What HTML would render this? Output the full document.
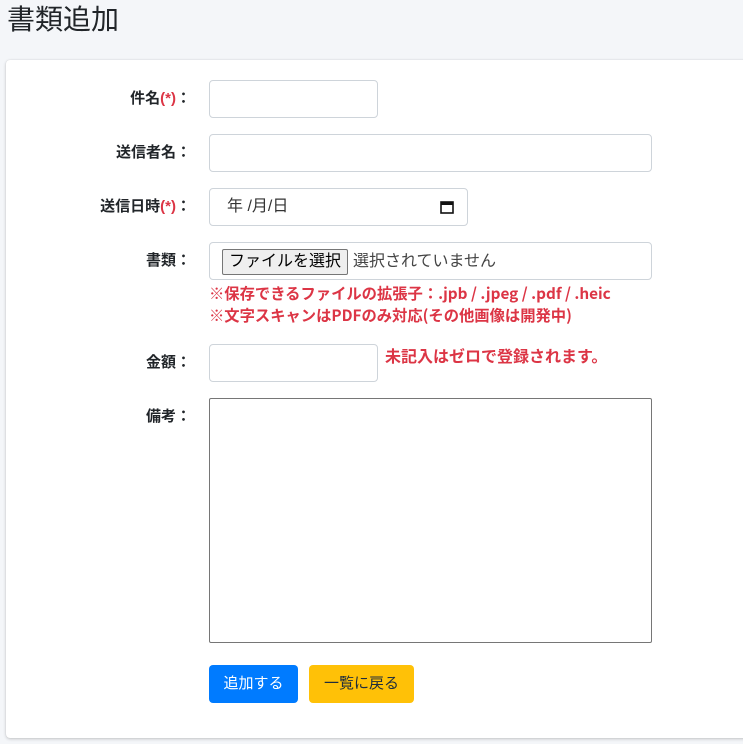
<!DOCTYPE html>
<html><head><meta charset="utf-8"><style>
body{margin:0;background:#f4f6f9;font-family:"Liberation Sans","Noto Sans CJK JP",sans-serif;width:743px;height:744px;overflow:hidden;position:relative;color:#212529}
h1{position:absolute;left:7px;top:2px;margin:0;font-size:28px;font-weight:400;line-height:36px}
.card{position:absolute;left:6px;top:60px;width:760px;height:678px;background:#fff;border-radius:4px;box-shadow:0 0 1px rgba(0,0,0,.13),0 1px 3px rgba(0,0,0,.2)}
.l{position:absolute;right:552px;font-weight:700;font-size:15px;line-height:20px;white-space:nowrap}
.l b{color:#dc3545}
.i{position:absolute;left:209px;border:1px solid #ced4da;border-radius:4px;background:#fff;box-sizing:border-box;height:38px}
.r{position:absolute;color:#dc3545;font-weight:700;font-size:15.3px;line-height:20px;white-space:nowrap;font-family:"Noto Sans CJK JP",sans-serif}
.btn{position:absolute;top:665px;height:38px;border-radius:4px;font-size:15px;line-height:38px;text-align:center}
</style></head><body>
<h1>書類追加</h1>
<div class="card"></div>
<div class="l" style="top:89px">件名<b>(*)</b>：</div>
<div class="i" style="top:80px;width:169px"></div>
<div class="l" style="top:143px">送信者名：</div>
<div class="i" style="top:134px;width:443px"></div>
<div class="l" style="top:197px">送信日時<b>(*)</b>：</div>
<div class="i" style="top:188px;width:259px;font-size:16px;line-height:36px;padding-left:17px;color:#333">年 /月/日
<svg style="position:absolute;left:230px;top:11px" width="14" height="14" viewBox="0 0 14 14"><rect x="1" y="2" width="12" height="11" fill="none" stroke="#111" stroke-width="1.6"/><rect x="1" y="2" width="12" height="3" fill="#111"/></svg></div>
<div class="l" style="top:251px">書類：</div>
<div class="i" style="top:242px;width:443px;font-size:16px;color:#444">
<span style="position:absolute;left:12px;top:6px;height:26px;width:126px;box-sizing:border-box;border:1px solid #767676;border-radius:2px;background:#efefef;color:#000;line-height:24px;text-align:center">ファイルを選択</span>
<span style="position:absolute;left:143px;top:8px;line-height:22px">選択されていません</span></div>
<div class="r" style="left:209px;top:283px">※保存できるファイルの拡張子：.jpb / .jpeg / .pdf / .heic</div>
<div class="r" style="left:209px;top:305px">※文字スキャンはPDFのみ対応(その他画像は開発中)</div>
<div class="l" style="top:353px">金額：</div>
<div class="i" style="top:344px;width:169px"></div>
<div class="r" style="left:385px;top:345px;font-size:16px">未記入はゼロで登録されます。</div>
<div class="l" style="top:407px">備考：</div>
<div class="i" style="top:398px;width:443px;height:245px;border-color:#767676;border-radius:2px"></div>
<div class="btn" style="left:209px;width:89px;background:#007bff;color:#fff">追加する</div>
<div class="btn" style="left:309px;width:105px;background:#ffc107;color:#1f2d3d">一覧に戻る</div>
</body></html>
